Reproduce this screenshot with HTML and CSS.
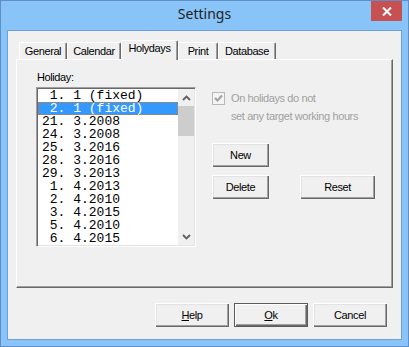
FILE: index.html
```html
<!DOCTYPE html>
<html lang="en">
<head>
    <meta charset="UTF-8">
    <title>Settings</title>
    <link rel="stylesheet" href="styles.css">
</head>
<body>
    <div class="window">
        <div class="titlebar">
            <span class="title">Settings</span>
            <span class="close">
                <svg width="10" height="9" viewBox="0 0 10 9">
                    <path d="M1 0.5 L9 8.5 M9 0.5 L1 8.5" stroke="#fff" stroke-width="2" fill="none"/>
                </svg>
            </span>
        </div>

        <div class="client">
            <div class="tabs">
                <div class="tab tab-general">General</div>
                <div class="tab tab-calendar">Calendar</div>
                <div class="tab tab-holydays active">Holydays</div>
                <div class="tab tab-print">Print</div>
                <div class="tab tab-database">Database</div>
            </div>

            <div class="panel">
                <div class="list-col">
                    <div class="label">Holiday:</div>
                    <div class="listbox">
                        <div class="items">
                            <div class="item"> 1. 1 (fixed)</div>
                            <div class="item selected"> 2. 1 (fixed)</div>
                            <div class="item">21. 3.2008</div>
                            <div class="item">24. 3.2008</div>
                            <div class="item">25. 3.2016</div>
                            <div class="item">28. 3.2016</div>
                            <div class="item">29. 3.2013</div>
                            <div class="item"> 1. 4.2013</div>
                            <div class="item"> 2. 4.2010</div>
                            <div class="item"> 3. 4.2015</div>
                            <div class="item"> 5. 4.2010</div>
                            <div class="item"> 6. 4.2015</div>
                        </div>
                        <div class="scrollbar">
                            <div class="sb-btn">
                                <svg width="9" height="6" viewBox="0 0 9 6">
                                    <polyline points="1,5 4.5,1.5 8,5" stroke="#606060" stroke-width="1.8" fill="none"/>
                                </svg>
                            </div>
                            <div class="thumb"></div>
                            <div class="track"></div>
                            <div class="sb-btn">
                                <svg width="9" height="6" viewBox="0 0 9 6">
                                    <polyline points="1,1 4.5,4.5 8,1" stroke="#606060" stroke-width="1.8" fill="none"/>
                                </svg>
                            </div>
                        </div>
                    </div>
                </div>

                <div class="side">
                    <div class="check-row">
                        <svg class="checkbox" width="13" height="13" viewBox="0 0 13 13">
                            <rect x="0.5" y="0.5" width="12" height="12" fill="#f4f4f4" stroke="#b8b8b8"/>
                            <polyline points="3,6 5.5,8.5 10,3.5" stroke="#a0a0a0" stroke-width="2" fill="none"/>
                        </svg>
                        <span class="disabled">On holidays do not</span>
                    </div>
                    <div class="disabled note2">set any target working hours</div>
                    <div class="btn-row first">
                        <div class="btn">New</div>
                    </div>
                    <div class="btn-row second">
                        <div class="btn">Delete</div>
                        <div class="btn wide">Reset</div>
                    </div>
                </div>
            </div>

            <div class="footer">
                <div class="btn big"><u>H</u>elp</div>
                <div class="btn big default"><u>O</u>k</div>
                <div class="btn big">Cancel</div>
            </div>
        </div>
    </div>
</body>
</html>
```

FILE: styles.css
```css
body {
    margin: 0;
    background-color: #fff;
    font-family: "Liberation Sans", Arial, sans-serif;
    font-size: 11px;
    letter-spacing: -0.4px;
    color: #000;
}
.window {
    width: 409px;
    height: 347px;
    box-sizing: border-box;
    border: 1px solid #5f8fc4;
    background-color: #88c4f8;
    display: flex;
    flex-direction: column;
}
.titlebar {
    height: 29px;
    display: grid;
    grid-template-columns: 1fr auto 1fr;
    align-items: start;
}
.title {
    grid-column: 2;
    font-family: "Noto Sans", sans-serif;
    font-size: 14px;
    letter-spacing: 0;
    line-height: 19px;
    padding-top: 3px;
    color: #222;
}
.close {
    grid-column: 3;
    justify-self: end;
    width: 31px;
    height: 20px;
    margin-right: 6px;
    background-color: #c75050;
    display: flex;
    align-items: center;
    justify-content: center;
}
.client {
    margin: 0 6px;
    height: 310px;
    box-sizing: border-box;
    border: 1px solid #6f9fd4;
    background-color: #f0f0f0;
    padding-top: 9px;
}

/* tabs */
.tabs {
    display: flex;
    align-items: flex-end;
    height: 19px;
    margin: 0 8px;
    padding-left: 3px;
}
.tab {
    box-sizing: border-box;
    height: 17px;
    padding-top: 2px;
    line-height: 13px;
    text-align: center;
    border-top: 1px solid #fff;
    border-left: 1px solid #fff;
    border-right: 1px solid #696969;
    border-radius: 2px 2px 0 0;
    box-shadow: inset -1px 0 #a0a0a0;
    background-color: #f0f0f0;
}
.tab-general { width: 48px; }
.tab-calendar { width: 54px; }
.tab-holydays { width: 57px; }
.tab-print { width: 40px; }
.tab-database { width: 58px; }
.tab.active {
    height: 20px;
    padding-top: 1px;
    margin-bottom: -1px;
    position: relative;
    z-index: 1;
}

/* panel */
.panel {
    margin: 0 8px;
    height: 229px;
    box-sizing: border-box;
    border-top: 1px solid #fff;
    border-left: 1px solid #fff;
    border-right: 1px solid #696969;
    border-bottom: 1px solid #696969;
    box-shadow: inset -1px -1px #a0a0a0;
    padding: 11px 0 0 19px;
    display: flex;
    align-items: flex-start;
}
.label {
    line-height: 13px;
    padding-left: 1px;
    margin-bottom: 3px;
}
.listbox {
    width: 160px;
    height: 160px;
    box-sizing: border-box;
    border: 1px solid;
    border-color: #a0a0a0 #fff #fff #a0a0a0;
    box-shadow: inset 1px 1px #696969, inset -1px -1px #e3e3e3;
    padding: 1px;
    background-color: #fff;
    display: flex;
}
.items {
    width: 140px;
    background-color: #fff;
}
.item {
    height: 13px;
    line-height: 13px;
    padding-left: 4px;
    font-family: "Liberation Mono", monospace;
    font-size: 13px;
    letter-spacing: 0;
    white-space: pre;
}
.item.selected {
    background-color: #3399ff;
    color: #fff;
    outline: 1px dotted #e07a10;
    outline-offset: -1px;
}
.scrollbar {
    width: 16px;
    background-color: #f0f0f0;
    display: flex;
    flex-direction: column;
}
.sb-btn {
    height: 17px;
    display: flex;
    align-items: center;
    justify-content: center;
}
.thumb {
    height: 30px;
    background-color: #cdcdcd;
}
.track {
    flex: 1;
}

/* right side */
.side {
    margin-left: 16px;
    margin-top: 21px;
}
.check-row {
    display: flex;
    gap: 6px;
    line-height: 13px;
}
.disabled {
    color: #a0a0a0;
    line-height: 13px;
}
.note2 {
    margin-top: 5px;
    padding-left: 19px;
}
.btn-row {
    display: flex;
    gap: 31px;
}
.btn-row.first {
    margin-top: 20px;
}
.btn-row.second {
    margin-top: 8px;
}
.btn {
    width: 57px;
    height: 24px;
    box-sizing: border-box;
    display: flex;
    align-items: center;
    justify-content: center;
    line-height: 13px;
    background-color: #f0f0f0;
    box-shadow: inset 1px 1px #fff, inset -1px -1px #696969, inset -2px -2px #a0a0a0, inset 2px 2px #e3e3e3;
}
.btn.wide {
    width: 75px;
}
.btn.big {
    width: 74px;
}
.btn.default {
    box-shadow: inset 0 0 0 1px #5a5a5a, inset 2px 2px #fff, inset -2px -2px #696969, inset -3px -3px #a0a0a0;
}
.footer {
    margin-top: 15px;
    display: flex;
    justify-content: flex-end;
    gap: 5px;
    padding-right: 14px;
}
```
